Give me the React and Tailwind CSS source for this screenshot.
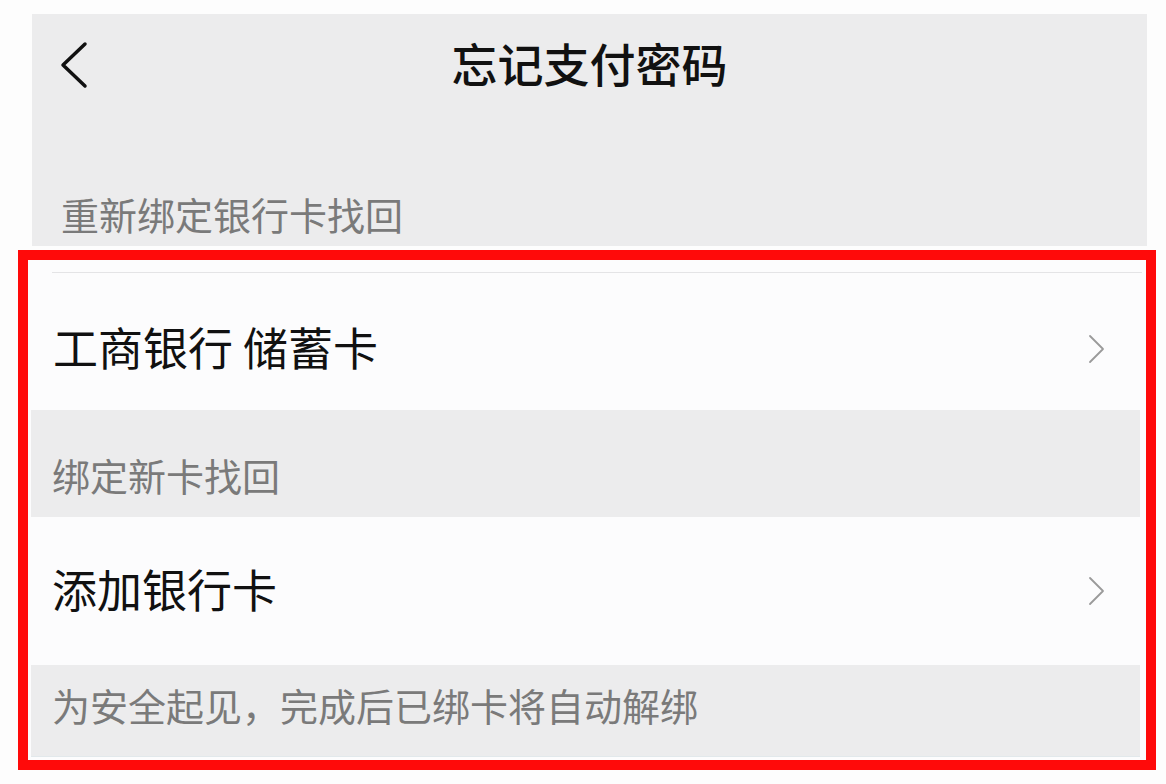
import React from 'react';

const font = { fontFamily: '"Noto Sans CJK SC", "Noto Sans", sans-serif' };

function BackIcon() {
  return (
    <svg width="28" height="48" viewBox="0 0 28 48" className="ml-[28px] mb-[2px]">
      <polyline points="25,3 3,24 25,45" fill="none" stroke="#111" strokeWidth="3.5" strokeLinecap="round" strokeLinejoin="round" />
    </svg>
  );
}

function Chevron() {
  return (
    <svg width="18" height="30" viewBox="0 0 18 30" className="mr-[34px]">
      <polyline points="2,2 15,15 2,28" fill="none" stroke="#9a9a9a" strokeWidth="1.8" strokeLinecap="round" strokeLinejoin="round" />
    </svg>
  );
}

export default function App() {
  return (
    <div className="min-h-screen bg-[#fdfdfd] pt-[14px]" style={font}>
      {/* header */}
      <div className="ml-[32px] w-[1115px] h-[232px] bg-[#ececed] flex flex-col">
        <div className="h-[104px] relative flex items-center">
          <BackIcon />
          <div className="absolute inset-0 pb-[8px] flex items-center justify-center text-[46px] font-medium text-[#111] leading-none">
            忘记支付密码
          </div>
        </div>
        <div className="flex-1" />
        <div className="pl-[29px] pb-[10px] text-[38px] leading-[44px] text-[#7a7a7a]">重新绑定银行卡找回</div>
      </div>

      {/* boxed section */}
      <div className="mt-[4px] ml-[18px] w-[1138px] h-[520px] border-[10px] border-[#ff0a0a] bg-[#fcfcfd] pl-[3px] pr-[6px] pb-[3px] flex flex-col">
        <div className="pt-[12px]">
          <div className="ml-[21px] mr-[-2px] h-px bg-[#e4e4e6]" />
        </div>
        <div className="h-[137px] pt-[15px] flex items-center justify-between">
          <span className="pl-[22px] pb-[6px] text-[45px] text-[#111] leading-none">工商银行 储蓄卡</span>
          <Chevron />
        </div>
        <div className="h-[107px] pt-[23px] bg-[#ececed] flex items-center">
          <span className="pl-[21px] text-[38px] leading-[44px] text-[#7a7a7a]">绑定新卡找回</span>
        </div>
        <div className="h-[148px] flex items-center justify-between">
          <span className="pl-[21px] pb-[6px] text-[45px] text-[#111] leading-none">添加银行卡</span>
          <Chevron />
        </div>
        <div className="flex-1 pb-[12px] bg-[#ececed] border-b border-[#e2e8eb] flex items-center">
          <span className="pl-[21px] text-[38px] leading-[44px] text-[#7a7a7a]">为安全起见，完成后已绑卡将自动解绑</span>
        </div>
      </div>
    </div>
  );
}
